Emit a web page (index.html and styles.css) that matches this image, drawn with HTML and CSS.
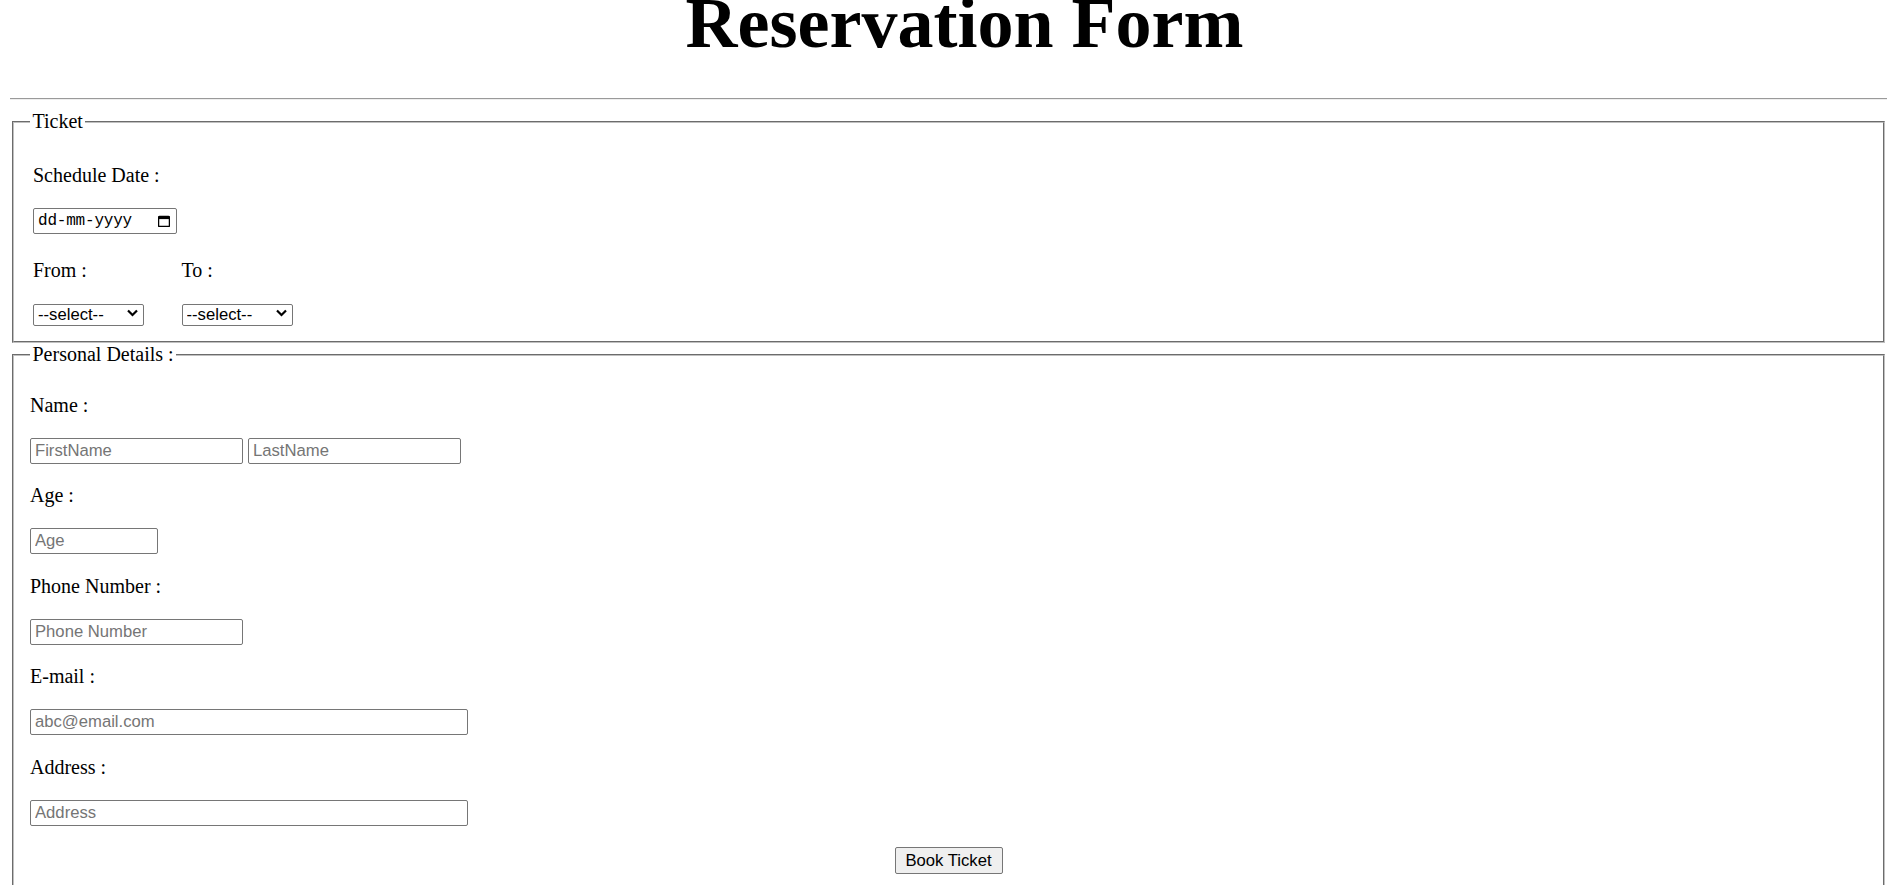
FILE: index.html
```html
<!DOCTYPE html>
<html lang="en">
<head>
<meta charset="utf-8">
<title>Reservation Form</title>
<link rel="stylesheet" href="styles.css">
</head>
<body>
<h1 class="title">Reservation Form</h1>
<hr class="rule">
<form class="form">
  <fieldset class="box box-ticket">
    <legend class="box-legend">Ticket</legend>
    <div class="ticket-grid">
      <p class="t-label t-first t-wide">Schedule Date :</p>
      <div class="date-input t-wide">
        <span class="date-text">dd-mm-yyyy</span>
        <svg class="cal-icon" width="12" height="13" viewBox="0 0 12 13" aria-hidden="true">
          <path d="M1.5 2.5h9a1 1 0 0 1 1 1v8a1 1 0 0 1-1 1h-9a1 1 0 0 1-1-1v-8a1 1 0 0 1 1-1z" fill="none" stroke="#000" stroke-width="1.5"/>
          <rect x="0.8" y="2.5" width="10.4" height="2.6" fill="#000"/>
        </svg>
      </div>
      <p class="t-label t-gap">From :</p>
      <p class="t-label t-gap">To :</p>
      <span class="select-wrap">
        <select class="select"><option>--select--</option></select>
        <svg class="chev" width="11" height="8" viewBox="0 0 11 8" aria-hidden="true"><path d="M1 1.5l4.5 4.5 4.5-4.5" fill="none" stroke="#000" stroke-width="2.2"/></svg>
      </span>
      <span class="select-wrap">
        <select class="select"><option>--select--</option></select>
        <svg class="chev" width="11" height="8" viewBox="0 0 11 8" aria-hidden="true"><path d="M1 1.5l4.5 4.5 4.5-4.5" fill="none" stroke="#000" stroke-width="2.2"/></svg>
      </span>
    </div>
  </fieldset>
  <fieldset class="box box-personal">
    <legend class="box-legend">Personal Details :</legend>
    <div class="field">
      <p class="field-label">Name :</p>
      <div class="field-control">
        <input class="text-input w-md" type="text" placeholder="FirstName">
        <input class="text-input w-md" type="text" placeholder="LastName">
      </div>
    </div>
    <div class="field">
      <p class="field-label">Age :</p>
      <div class="field-control">
        <input class="text-input w-sm" type="text" placeholder="Age">
      </div>
    </div>
    <div class="field">
      <p class="field-label">Phone Number :</p>
      <div class="field-control">
        <input class="text-input w-md" type="text" placeholder="Phone Number">
      </div>
    </div>
    <div class="field">
      <p class="field-label">E-mail :</p>
      <div class="field-control">
        <input class="text-input w-lg" type="text" placeholder="abc@email.com">
      </div>
    </div>
    <div class="field">
      <p class="field-label">Address :</p>
      <div class="field-control">
        <input class="text-input w-lg" type="text" placeholder="Address">
      </div>
    </div>
    <div class="actions">
      <button class="btn" type="button">Book Ticket</button>
    </div>
  </fieldset>
</form>
</body>
</html>
```
FILE: styles.css
```css
html, body {
  background: #ffffff;
}

body {
  margin: 0 10px;
  font-family: "Liberation Serif", "Times New Roman", serif;
  font-size: 20px;
  color: #000000;
}

.title {
  margin: -13px 0 39px;
  padding-left: 32px;
  font-size: 72px;
  line-height: 72px;
  font-weight: bold;
  text-align: center;
}

.rule {
  margin: 0 0 10px;
  height: 0;
  border: 0;
  border-top: 1px solid #9a9a9a;
  border-bottom: 1px solid #eeeeee;
}

.form {
  margin: 0;
}

.box {
  margin: 0 2px;
  border: 2px groove #c0c0c0;
  padding: 7px 16px 12.5px;
  min-width: 0;
}

.box-legend {
  padding: 0 2.5px;
  line-height: 23px;
  font-size: 20px;
}

.ticket-grid {
  display: grid;
  grid-template-columns: 148.5px auto;
  justify-content: start;
  align-items: start;
  padding: 3.5px 3px 4.5px;
}

.t-wide {
  grid-column: 1 / -1;
}

.t-label {
  margin: 0;
  line-height: 23px;
}

.t-first {
  margin-top: 20.5px;
}

.t-gap {
  margin-top: 25px;
}

.date-input {
  margin-top: 20.5px;
  width: 144px;
  height: 26.5px;
  box-sizing: border-box;
  border: 1px solid #767676;
  border-radius: 2px;
  display: flex;
  align-items: center;
  justify-content: space-between;
  padding: 0 6px 0 4px;
  background: #ffffff;
}

.date-text {
  font-family: "Liberation Mono", "DejaVu Sans Mono", monospace;
  font-size: 16px;
  color: #000000;
  letter-spacing: -0.2px;
}

.cal-icon {
  display: block;
}

.select-wrap {
  margin-top: 20px;
  position: relative;
  display: block;
  width: 111px;
  height: 22px;
}

.select {
  -webkit-appearance: none;
  appearance: none;
  width: 111px;
  height: 22px;
  box-sizing: border-box;
  margin: 0;
  border: 1px solid #767676;
  border-radius: 2px;
  padding: 0 0 0 4px;
  background: #ffffff;
  font-family: "Liberation Sans", Arial, sans-serif;
  font-size: 16.67px;
  color: #000000;
}

.chev {
  position: absolute;
  right: 6px;
  top: 7px;
  pointer-events: none;
}

.field-label {
  margin: 0;
  padding-top: 20.5px;
  line-height: 23px;
}

.field-control {
  margin-top: 21px;
  display: flex;
  gap: 5px;
}

.text-input {
  height: 26px;
  box-sizing: border-box;
  margin: 0;
  border: 1px solid #767676;
  border-radius: 2px;
  padding: 0 4px;
  font-family: "Liberation Sans", Arial, sans-serif;
  font-size: 16.67px;
  color: #000000;
  background: #ffffff;
}

.text-input::placeholder {
  color: #757575;
}

.w-sm { width: 128px; }
.w-md { width: 213px; }
.w-lg { width: 438px; }

.actions {
  margin-top: 21.5px;
  display: flex;
  justify-content: center;
}

.btn {
  height: 27px;
  width: 108px;
  box-sizing: border-box;
  margin: 0;
  border: 1px solid #767676;
  border-radius: 2px;
  background: #efefef;
  padding: 0;
  font-family: "Liberation Sans", Arial, sans-serif;
  font-size: 16.67px;
  color: #000000;
}
```
